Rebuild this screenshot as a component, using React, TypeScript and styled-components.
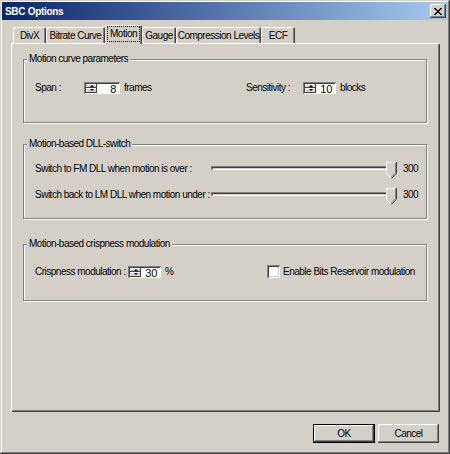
import styled, { createGlobalStyle } from 'styled-components';

const GlobalStyle = createGlobalStyle`
  html, body {
    margin: 0;
    padding: 0;
    background: #d4d0c8;
  }
  body {
    font-family: "Liberation Sans", Arial, sans-serif;
    font-size: 10px;
    letter-spacing: -0.5px;
    color: #000;
  }
`

const Window = styled.div`
  width: 450px;
  height: 454px;
  box-sizing: border-box;
  padding: 2px;
  background: #d4d0c8;
  display: flex;
  flex-direction: column;
  box-shadow: inset -1px -1px 0 #404040, inset 1px 1px 0 #d4d0c8,
    inset -2px -2px 0 #808080, inset 2px 2px 0 #fff;
`

const TitleBar = styled.div`
  height: 18px;
  display: flex;
  align-items: center;
  justify-content: space-between;
  padding: 0 2px 0 3px;
  background: linear-gradient(to right, #0a246a, #a6caf0);
  color: #fff;
  font-weight: bold;
  font-size: 10px;
  letter-spacing: -0.3px;
`

const CloseButton = styled.div`
  width: 16px;
  height: 14px;
  display: flex;
  align-items: center;
  justify-content: center;
  background: #d4d0c8;
  box-shadow: inset -1px -1px 0 #404040, inset 1px 1px 0 #fff,
    inset -2px -2px 0 #808080;
`

const Content = styled.div`
  flex: 1;
  display: flex;
  flex-direction: column;
  padding: 5px 8px 0 9px;
`

const TabStrip = styled.div`
  height: 19px;
  display: flex;
  align-items: flex-end;
  padding-left: 2px;
  position: relative;
  z-index: 1;
`

const Tab = styled.div<{ $w: number; $active?: boolean }>`
  width: ${p => p.$w}px;
  height: ${p => (p.$active ? 19 : 16)}px;
  margin-bottom: ${p => (p.$active ? 0 : 1)}px;
  box-sizing: border-box;
  display: flex;
  align-items: center;
  justify-content: center;
  padding-bottom: ${p => (p.$active ? 2 : 0)}px;
  background: #d4d0c8;
  border-radius: 2px 2px 0 0;
  box-shadow: inset 1px 1px 0 #fff, inset -1px 0 0 #404040, inset -2px 0 0 #808080;
  white-space: nowrap;
`

const FocusText = styled.span`
  outline: 1px dotted #000;
  outline-offset: 0;
  padding: 1px 2px;
  line-height: 12px;
`

const Panel = styled.div`
  height: 369px;
  margin-top: -1px;
  box-sizing: border-box;
  padding: 10px 13px 0 12px;
  display: flex;
  flex-direction: column;
  box-shadow: inset 1px 1px 0 #fff, inset -1px -1px 0 #404040,
    inset -2px -2px 0 #808080;
`

const Group = styled.fieldset<{ $h: number; $mt: number }>`
  margin: ${p => p.$mt}px 0 0 0;
  padding: 0 11px;
  height: ${p => p.$h}px;
  box-sizing: border-box;
  border: 1px solid #808080;
  box-shadow: inset 1px 1px 0 #fff, 1px 1px 0 #fff;
  min-width: 0;
`

const Legend = styled.legend`
  padding: 0 2px;
  margin-left: -8px;
  line-height: 12px;
  background: #d4d0c8;
`

const GroupBody = styled.div<{ $pt: number }>`
  padding-top: ${p => p.$pt}px;
  display: flex;
  flex-direction: column;
  gap: 10px;
`

const GridRow = styled.div<{ $first: number }>`
  display: grid;
  grid-template-columns: ${p => p.$first}px 1fr;
  height: 13px;
  align-items: center;
`

const Cell = styled.div`
  display: flex;
  align-items: center;
`

const Label = styled.span<{ $w?: number }>`
  ${p => (p.$w ? `width: ${p.$w}px;` : '')}
  flex: none;
  white-space: nowrap;
`

const Unit = styled.span`
  margin-left: 4px;
`

const SpinBox = styled.div<{ $w: number }>`
  width: ${p => p.$w}px;
  height: 12px;
  box-sizing: border-box;
  display: flex;
  background: #fff;
  padding: 2px 1px 1px 2px;
  box-shadow: inset 1px 1px 0 #808080, inset -1px -1px 0 #fff,
    inset 2px 2px 0 #404040;
`

const SpinButtons = styled.div`
  width: 11px;
  display: flex;
  flex-direction: column;
  flex: none;
`

const SpinBtn = styled.div<{ $down?: boolean }>`
  flex: 1;
  display: flex;
  align-items: center;
  justify-content: center;
  background: #d4d0c8;
  box-shadow: inset -1px -1px 0 #404040, inset 1px 1px 0 #fff;

  &::after {
    content: '';
    width: 0;
    height: 0;
    border-left: 2px solid transparent;
    border-right: 2px solid transparent;
    ${p => (p.$down ? 'border-top: 2px solid #000;' : 'border-bottom: 2px solid #000;')}
    margin-top: ${p => (p.$down ? -1 : 0)}px;
  }
`

const SpinValue = styled.div`
  flex: 1;
  text-align: right;
  padding-right: 3px;
  line-height: 8px;
  margin-top: 1px;
  font-size: 11px;
  letter-spacing: -0.3px;
`

const SliderRow = styled.div`
  height: 16px;
  display: flex;
  align-items: center;
`

const Slider = styled.div`
  width: 188px;
  height: 16px;
  position: relative;
  display: flex;
  align-items: center;
`

const Track = styled.div`
  width: 186px;
  height: 4px;
  background: #d4d0c8;
  box-shadow: inset 1px 1px 0 #808080, inset -1px -1px 0 #fff,
    inset 2px 2px 0 #404040;
`

const Thumb = styled.svg`
  position: absolute;
  right: 0;
  top: 2px;
`

const Value = styled.span`
  margin-left: 6px;
`

const CheckBox = styled.div`
  width: 13px;
  height: 13px;
  box-sizing: border-box;
  background: #fff;
  margin-right: 3px;
  box-shadow: inset 1px 1px 0 #808080, inset -1px -1px 0 #fff,
    inset 2px 2px 0 #404040, inset -2px -2px 0 #d4d0c8;
`

const Footer = styled.div`
  display: flex;
  justify-content: flex-end;
  gap: 3px;
  margin-top: 12px;
  padding-right: 1px;
`

const Button = styled.div<{ $default?: boolean; $w: number }>`
  width: ${p => p.$w}px;
  height: 19px;
  box-sizing: border-box;
  display: flex;
  align-items: center;
  justify-content: center;
  background: #d4d0c8;
  ${p =>
    p.$default
      ? `border: 1px solid #000;
         box-shadow: inset -1px -1px 0 #404040, inset 1px 1px 0 #fff, inset -2px -2px 0 #808080;`
      : `box-shadow: inset -1px -1px 0 #404040, inset 1px 1px 0 #fff, inset -2px -2px 0 #808080;`}
`

function Spinner({ value, width }: { value: string; width: number }) {
  return (
    <SpinBox $w={width}>
      <SpinButtons>
        <SpinBtn />
        <SpinBtn $down />
      </SpinButtons>
      <SpinValue>{value}</SpinValue>
    </SpinBox>
  )
}

function TrackBar() {
  return (
    <Slider>
      <Track />
      <Thumb width="11" height="17" viewBox="0 0 11 17">
        <path d="M0 0H10V11L5 16L0 11Z" fill="#d4d0c8" />
        <path d="M0.5 11V0.5H9.5" stroke="#fff" fill="none" />
        <path d="M0.5 11.5L5 16" stroke="#fff" fill="none" />
        <path d="M10.5 0V11.2L5.3 16.5" stroke="#404040" fill="none" />
        <path d="M9.5 1V10.8L5 15.3" stroke="#808080" fill="none" />
      </Thumb>
    </Slider>
  )
}

const tabs = [
  { name: 'DivX', w: 33 },
  { name: 'Bitrate Curve', w: 59 },
  { name: 'Motion', w: 37, active: true },
  { name: 'Gauge', w: 34 },
  { name: 'Compression Levels', w: 85 },
  { name: 'ECF', w: 34 },
]

export default function App() {
  return (
    <>
      <GlobalStyle />
      <Window>
        <TitleBar>
          <span>SBC Options</span>
          <CloseButton>
            <svg width="8" height="7" viewBox="0 0 8 7">
              <path d="M0 0L7 7M1 0L8 7M7 0L0 7M8 0L1 7" stroke="#000" strokeWidth="1" />
            </svg>
          </CloseButton>
        </TitleBar>
        <Content>
          <TabStrip>
            {tabs.map(t => (
              <Tab key={t.name} $w={t.w} $active={t.active}>
                {t.active ? <FocusText>{t.name}</FocusText> : t.name}
              </Tab>
            ))}
          </TabStrip>
          <Panel>
            <Group $h={70} $mt={0}>
              <Legend>Motion curve parameters</Legend>
              <GroupBody $pt={16}>
                <GridRow $first={211}>
                  <Cell>
                    <Label $w={49}>Span :</Label>
                    <Spinner value="8" width={36} />
                    <Unit>frames</Unit>
                  </Cell>
                  <Cell>
                    <Label $w={57}>Sensitivity :</Label>
                    <Spinner value="10" width={33} />
                    <Unit>blocks</Unit>
                  </Cell>
                </GridRow>
              </GroupBody>
            </Group>
            <Group $h={81} $mt={15}>
              <Legend>Motion-based DLL-switch</Legend>
              <GroupBody $pt={10}>
                <SliderRow>
                  <Label $w={176}>Switch to FM DLL when motion is over :</Label>
                  <TrackBar />
                  <Value>300</Value>
                </SliderRow>
                <SliderRow>
                  <Label $w={176}>Switch back to LM DLL when motion under :</Label>
                  <TrackBar />
                  <Value>300</Value>
                </SliderRow>
              </GroupBody>
            </Group>
            <Group $h={63} $mt={19}>
              <Legend>Motion-based crispness modulation</Legend>
              <GroupBody $pt={15}>
                <GridRow $first={232}>
                  <Cell>
                    <Label $w={93}>Crispness modulation :</Label>
                    <Spinner value="30" width={33} />
                    <Unit>%</Unit>
                  </Cell>
                  <Cell>
                    <CheckBox />
                    <Label>Enable Bits Reservoir modulation</Label>
                  </Cell>
                </GridRow>
              </GroupBody>
            </Group>
          </Panel>
          <Footer>
            <Button $default $w={62}>OK</Button>
            <Button $w={61}>Cancel</Button>
          </Footer>
        </Content>
      </Window>
    </>
  )
}
